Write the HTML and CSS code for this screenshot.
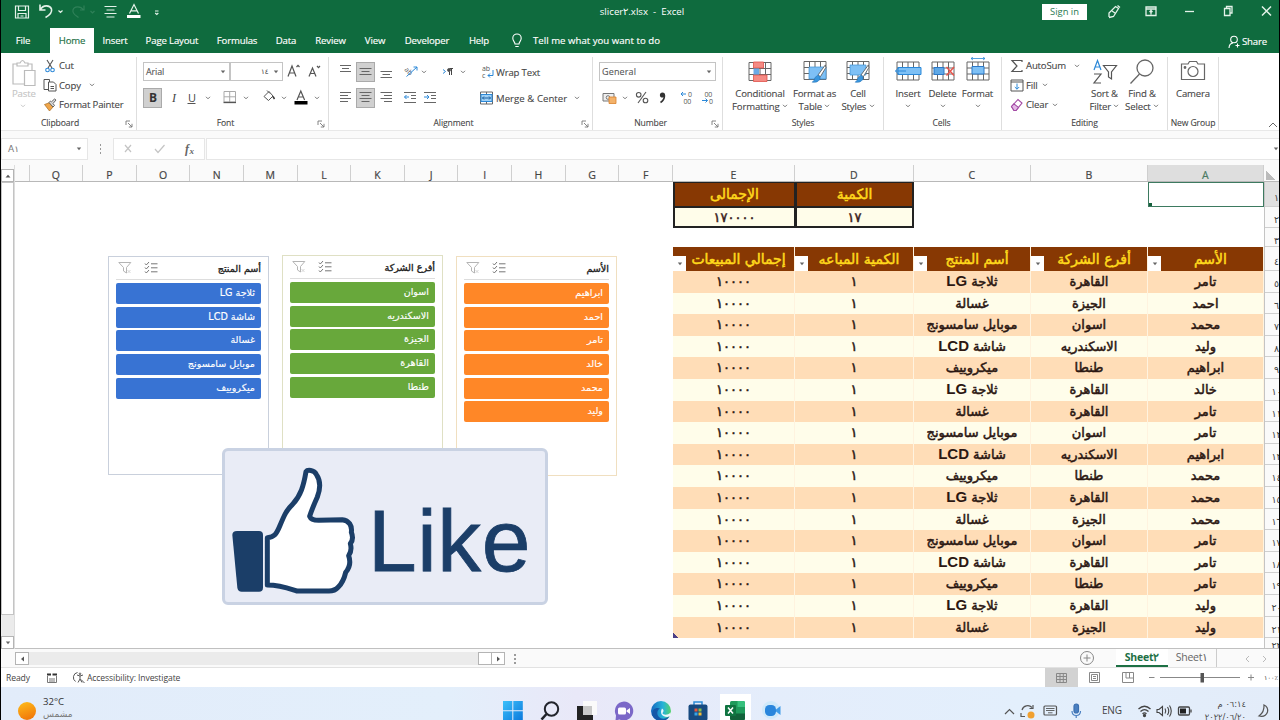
FILE: index.html
```html
<!DOCTYPE html>
<html lang="en">
<head>
<meta charset="utf-8">
<title>slicer2.xlsx - Excel</title>
<link rel="stylesheet" href="styles.css">
</head>
<body>
<svg class="defs" width="0" height="0">
  <symbol id="caret" viewBox="0 0 6 4"><path d="M1 .8 L3 2.8 L5 .8" fill="none" stroke="#777" stroke-width="1"/></symbol>
  <symbol id="tri" viewBox="0 0 6 4"><path d="M.8 .6 H5.2 L3 3.2 Z" fill="#666"/></symbol>
  <symbol id="launch" viewBox="0 0 8 8"><path d="M1 5 V1 H5 M3 3 L7 7 M7 3.8 V7 H3.8" fill="none" stroke="#777" stroke-width=".9"/></symbol>
  <symbol id="grid" viewBox="0 0 24 20"><path d="M1 1H23V19H1Z M1 7H23 M1 13H23 M6.5 1V19 M12 1V19 M17.5 1V19" fill="#fff" stroke="#666" stroke-width="1"/></symbol>
  <symbol id="brush" viewBox="0 0 16 22"><path d="M15 1 L7 12 L9.5 14 L15.5 4 Z" fill="#fff" stroke="#555" stroke-width=".9"/><path d="M6.5 12.5 Q10 13 9 17 Q6 21 .5 20 Q3.500 18 3.500 15 Z" fill="#3a96dd" stroke="#1f6fb5" stroke-width=".6"/></symbol>
  <symbol id="filter" viewBox="0 0 14 14"><path d="M.8 1.500H12.800L8.500 6.500V12L5.500 10V6.500Z" fill="none" stroke="#b4b4b4" stroke-width="1"/><path d="M9.500 9L12.500 12M12.500 9L9.500 12" stroke="#ccc" stroke-width=".8"/></symbol>
  <symbol id="multi" viewBox="0 0 14 14"><path d="M1 2.500L2.300 4L5 1M1 6.500L2.300 8L5 5M1 10.500L2.300 12L5 9M7 2.800H13.500M7 6.800H13.500M7 10.800H13.500" fill="none" stroke="#777" stroke-width="1"/></symbol>
</svg>

<div class="app">
  <header class="titlebar">
    <div class="titlerow">
      <svg class="quick" width="170" height="24" viewBox="0 0 170 24" fill="none" stroke="#e4f2e9" stroke-width="1.200">
        <path d="M15.500 6H28.500V18H15.500Z M18.500 6V10.500H25.500V6 M18 18V13.500H26V18 M20.500 16H23.500"/>
        <path d="M40 4.500V10H45.500 M40.300 9.800C43 4.500 50 5 51.500 9C52.500 13 49 15.500 45.500 17.500" stroke-width="1.600"/>
        <path d="M58.500 10.500L60.500 12.500L62.500 10.500"/>
        <path d="M84 5.500V10H80 M83.500 10C80.500 5.500 74 6 73 10C72 14 76 15.500 78.500 17.500" stroke="#2f8058"/>
        <path d="M90.500 11L92.500 13L94.500 11" stroke="#2f8058"/>
        <path d="M104.500 6.500H116.500 M106.500 10H114.500 M104.500 13.500H116.500 M106.500 17H114.500"/>
        <path d="M129.500 13.500L134 4.500L138.500 13.500 M131.200 10.800H136.800"/>
        <path d="M127 16.500H140.500" stroke="#fff" stroke-width="3"/>
        <path d="M155 11H158.500 M155.200 13L156.800 14.500L158.300 13"/>
      </svg>
      <div class="doc">slicer٢.xlsx&nbsp; -&nbsp; Excel</div>
      <div class="signin">Sign in</div>
      <svg class="winctl" width="180" height="24" viewBox="0 0 180 24" fill="none" stroke="#e4f2e9" stroke-width="1.300">
        <path d="M11 17V13L17.500 6.500L20.500 8.500L15.500 16.500L11 17.500M19.500 5.500L22 7.500M14 11L17 13"/>
        <path d="M48 7H58V15.500H48Z M48 9H58 M53 14.500V10.500M51.500 12L53 10.500L54.500 12"/>
        <path d="M87 11.500H96"/>
        <path d="M126.500 8.500H132V15.500H126.500Z M128.500 8V6.500H134V13H132.500"/>
        <path d="M164 6.500L173 15.500M173 6.500L164 15.500" stroke-width="1.500"/>
      </svg>
    </div>
    <nav class="tabs">
      <span class="tab t-file">File</span><span class="tab t-home">Home</span><span class="tab t-ins">Insert</span><span class="tab t-page">Page Layout</span><span class="tab t-form">Formulas</span><span class="tab t-data">Data</span><span class="tab t-rev">Review</span><span class="tab t-view">View</span><span class="tab t-dev">Developer</span><span class="tab t-help">Help</span>
      <svg class="bulb" width="12" height="16" viewBox="0 0 12 16" fill="none" stroke="#fff" stroke-width="1.100"><path d="M4 11C4 9 1.800 8 1.800 5.200A4.200 4.200 0 0 1 10.200 5.200C10.200 8 8 9 8 11ZM4.300 13.500H7.700"/></svg>
      <span class="tell">Tell me what you want to do</span>
      <span class="share"><svg width="12" height="14" viewBox="0 0 12 14" fill="none" stroke="#fff" stroke-width="1.100"><circle cx="6" cy="4.500" r="3.300"/><path d="M1 13C1.200 9.500 3 8.200 5 8M7.500 10.500H11.500M9.500 8.500V12.500"/></svg>Share</span>
    </nav>
  </header>

  <section class="ribbon">
    <div class="group g-clip">
      <div class="gbody">
        <div class="paste">
          <svg width="24" height="28" viewBox="0 0 24 28" fill="#fff" stroke="#bbb" stroke-width="1.200"><path d="M1 5H20V25H1Z"/><path d="M5 7V4H8Q10.500 -1 13 4H16V7Z"/><path d="M12.500 11.500H23V26.500H12.500Z"/></svg>
          <span>Paste</span><svg class="cr faint" width="6" height="4"><use href="#caret"/></svg>
        </div>
        <div class="cliprows">
          <div class="cmd"><svg width="14" height="14" viewBox="0 0 14 14" fill="none" stroke="#555" stroke-width="1.100"><path d="M4 1L9 9M10 1L5 9"/><circle cx="4.500" cy="11" r="1.800" stroke="#2b88d8"/><circle cx="9.500" cy="11" r="1.800" stroke="#2b88d8"/></svg><span>Cut</span></div>
          <div class="cmd"><svg width="14" height="14" viewBox="0 0 14 14" fill="#fff" stroke="#555"><path d="M1 1.500H6.500V11.500H1Z"/><path d="M5.500 4H10.500L13 6.500V13H5.500ZM7.500 8.500H11M7.500 10.500H11"/></svg><span>Copy</span><svg class="cr gap8" width="6" height="4"><use href="#caret"/></svg></div>
          <div class="cmd"><svg width="14" height="14" viewBox="0 0 14 14"><path d="M1.500 6.500L7 4.500L10 9L6.500 13Z" fill="#f0a64a" stroke="#a86a1f" stroke-width=".7"/><path d="M6 4.500L10 9L11.500 7.500L10 5.500L13 2L11.500 1L8.500 3.800L7.500 3Z" fill="#ddd" stroke="#555" stroke-width=".9"/></svg><span>Format Painter</span></div>
        </div>
      </div>
      <div class="glabel"><span>Clipboard</span><svg width="8" height="8"><use href="#launch"/></svg></div>
    </div>

    <div class="group g-font">
      <div class="gbody col">
        <div class="line1">
          <div class="combo c-name"><span>Arial</span><svg width="6" height="4"><use href="#tri"/></svg></div>
          <div class="combo c-size"><span class="ar">١٤</span><svg width="6" height="4"><use href="#tri"/></svg></div>
          <svg class="grow" width="36" height="18" viewBox="0 0 36 18" fill="none" stroke="#555" stroke-width="1.200"><path d="M1 13.500L5 3L9 13.500M2.500 10H7.500M9.500 4L11 2.300L12.500 4"/><path d="M22 13.500L25.500 5L29 13.500M23.300 10.500H27.700M30 3L31.500 4.700L33 3"/></svg>
        </div>
        <svg class="strip" width="180" height="20" viewBox="0 0 180 20">
          <rect x=".5" y=".5" width="18" height="19" fill="#d0d0d0" stroke="#aaa"/>
          <text x="6" y="13.500" class="sb">B</text><text x="29" y="13.500" class="si">I</text><text x="45" y="13.500" class="su">U</text>
          <path d="M44.500 15.500H52.500" stroke="#555"/>
          <use href="#caret" x="62" y="8" width="6" height="4"/>
          <path d="M81 3.500H92.500V14H81ZM86.700 3.500V14M81 8.800H92.500" fill="none" stroke="#aaa"/><path d="M80.500 14.500H93" stroke="#555" stroke-width="1.300"/>
          <use href="#caret" x="100" y="8" width="6" height="4"/>
          <path d="M121 8.500L126 3.500L130 8L125.500 12.500ZM124 2.500L127 5.500" fill="none" stroke="#555"/><path d="M130 8.500L131.500 11" stroke="#333" stroke-width="1.500"/>
          <use href="#caret" x="138" y="8" width="6" height="4"/>
          <path d="M154 12L157.800 3L161.600 12M155.300 9H160.300" fill="none" stroke="#555" stroke-width="1.200"/><rect x="151.500" y="13" width="13" height="3.500" fill="#000"/>
          <use href="#caret" x="171" y="8" width="6" height="4"/>
        </svg>
      </div>
      <div class="glabel"><span>Font</span><svg width="8" height="8"><use href="#launch"/></svg></div>
    </div>

    <div class="group g-align">
      <div class="gbody col">
        <div class="line1">
          <svg width="144" height="20" viewBox="0 0 144 20" fill="none" stroke="#666">
            <path d="M3 3.500H14M5 6.500H12M3 9.500H14"/>
            <rect x="19.500" y=".5" width="18" height="19" fill="#d0d0d0" stroke="#aaa"/>
            <path d="M22.500 6.500H34.500M24.500 9.500H32.500M22.500 12.500H34.500"/>
            <path d="M43.500 9.500H55M45.500 12.500H53M43.500 15.500H55"/>
            <text x="67" y="8" transform="rotate(45 67 8)" class="tiny">ab</text><path d="M69.500 14.500L80 5M80 8.500V5H76.500" stroke="#2b88d8"/>
            <use href="#caret" x="84" y="8" width="6" height="4"/>
            <path d="M106 7.500L108.500 9.500L106 11.500" stroke="#2b88d8"/><path d="M112.500 13V6.500H116M114.500 13V6.500" stroke="#444"/><circle cx="112" cy="8" r="1.500" fill="#444"/>
            <use href="#caret" x="123" y="8" width="6" height="4"/>
          </svg>
          <svg width="14" height="16" viewBox="0 0 14 16" fill="none"><text x="1" y="7" class="tiny">ab</text><text x="1" y="14" class="tiny">c</text><path d="M12 6V11.500H7M9 9.500L7 11.500L9 13.500" stroke="#2b88d8"/></svg>
          <span class="after">Wrap Text</span>
        </div>
        <div class="line2">
          <svg width="143" height="20" viewBox="0 0 143 20" fill="none" stroke="#666">
            <path d="M3 4.500H14M3 7.500H11M3 10.500H14M3 13.500H11"/>
            <rect x="19.500" y=".5" width="18" height="19" fill="#d0d0d0" stroke="#aaa"/>
            <path d="M22.500 4.500H34.500M24.500 7.500H32.500M22.500 10.500H34.500M24.500 13.500H32.500"/>
            <path d="M43.500 4.500H55M47 7.500H55M43.500 10.500H55M47 13.500H55"/>
            <path d="M67 4.500H79M74 7.500H79M74 10.500H79M67 14.500H79M87 4.500H99M94 7.500H99M94 10.500H99M87 14.500H99"/>
            <path d="M72 9H67.500M69.500 7L67.500 9L69.500 11M87 9H92M90 7L92 9L90 11" stroke="#2b88d8"/>
          </svg>
          <svg width="13" height="14" viewBox="0 0 13 14" fill="none" stroke="#666"><path d="M.5 1H12.500V13H.5ZM6.500 1V13" fill="#fff"/><rect x="1" y="3.500" width="11" height="7" fill="#9fd0f5" stroke="#2b88d8"/><path d="M2.500 7H10.500M4 5.500L2.500 7L4 8.500M9 5.500L10.500 7L9 8.500" stroke="#1a5fa0"/></svg>
          <span class="after merge">Merge &amp; Center</span><svg class="cr" width="6" height="4"><use href="#caret"/></svg>
        </div>
      </div>
      <div class="glabel"><span>Alignment</span><svg width="8" height="8"><use href="#launch"/></svg></div>
    </div>

    <div class="group g-num">
      <div class="gbody col">
        <div class="combo c-gen"><span>General</span><svg width="6" height="4"><use href="#tri"/></svg></div>
        <svg class="strip" width="118" height="20" viewBox="0 0 118 20" fill="none">
          <path d="M3 5.500H14V13H3Z" stroke="#777" fill="#eee"/><circle cx="8" cy="9.500" r="1.800" stroke="#777"/><path d="M9 9H16V15.500H9Z" fill="#f3b26a" stroke="#d9822b" stroke-width=".8"/>
          <use href="#caret" x="22" y="8" width="6" height="4"/>
          <circle cx="38.700" cy="6.800" r="2.300" stroke="#555" stroke-width="1.100"/><circle cx="45.500" cy="12.500" r="2.300" stroke="#555" stroke-width="1.100"/><path d="M46 4L38 15" stroke="#555" stroke-width="1.100"/>
          <circle cx="62.500" cy="7" r="2.600" fill="#333"/><path d="M64.500 7.500Q64.500 12 60.500 14.500" stroke="#333" stroke-width="1.600"/>
          <text x="88" y="8.500" class="tiny">0</text><text x="83.500" y="15.500" class="tiny">00</text><path d="M86 6H81M83 4L81 6L83 8" stroke="#2b88d8"/>
          <text x="104.500" y="8.500" class="tiny">00</text><text x="109" y="15.500" class="tiny">0</text><path d="M102 12.500H107.500M105.500 10.500L107.500 12.500L105.500 14.500" stroke="#2b88d8"/>
        </svg>
      </div>
      <div class="glabel"><span>Number</span><svg width="8" height="8"><use href="#launch"/></svg></div>
    </div>

    <div class="group g-styles">
      <div class="gbody big">
        <div class="bigbtn w64"><svg width="26" height="24" viewBox="0 0 26 24"><use href="#grid" x="1" y="1" width="24" height="21"/><path d="M6.500 2H16.500V8H6.500Z M6.500 15H20V21.500H6.500Z" fill="#f58b84" stroke="#e0524a" stroke-width=".8"/><path d="M6.500 8.500H12V14.500H6.500Z" fill="#6aa9e6"/></svg><span>Conditional</span><span>Formatting <svg class="cr" width="6" height="4"><use href="#caret"/></svg></span></div>
        <div class="bigbtn w44"><svg width="26" height="24" viewBox="0 0 26 24"><use href="#grid" x="1" y="0" width="24" height="21"/><path d="M7 7H24V19H7Z" fill="#7ec0f5" stroke="#3a8fd6" stroke-width=".7"/><use href="#brush" x="9" y="4" width="16" height="20"/></svg><span>Format as</span><span>Table <svg class="cr" width="6" height="4"><use href="#caret"/></svg></span></div>
        <div class="bigbtn w42"><svg width="26" height="24" viewBox="0 0 26 24"><use href="#grid" x="1" y="0" width="24" height="21"/><path d="M5 5H21V15H5Z" fill="#7ec0f5" stroke="#3a8fd6" stroke-width=".7"/><use href="#brush" x="9" y="4" width="16" height="20"/></svg><span>Cell</span><span>Styles <svg class="cr" width="6" height="4"><use href="#caret"/></svg></span></div>
      </div>
      <div class="glabel"><span>Styles</span></div>
    </div>

    <div class="group g-cells">
      <div class="gbody big">
        <div class="bigbtn w34"><svg width="28" height="24" viewBox="0 0 28 24"><use href="#grid" x="2" y="1" width="24" height="20"/><path d="M4 7.500H27V14.500H4Z" fill="#7ec0f5" stroke="#2b88d8"/><path d="M12 11H1.500M5 7.500L1.500 11L5 14.500" fill="none" stroke="#2b88d8"/></svg><span>Insert</span><span><svg class="cr" width="6" height="4"><use href="#caret"/></svg></span></div>
        <div class="bigbtn w35"><svg width="28" height="24" viewBox="0 0 28 24"><use href="#grid" x="2" y="1" width="24" height="20"/><path d="M5 7.500H15V14.500H5Z" fill="#5fa8e6" stroke="#2b78c8"/><path d="M17.500 7L25 15.500M25 7L17.500 15.500" stroke="#e8554d" stroke-width="1.500"/></svg><span>Delete</span><span><svg class="cr" width="6" height="4"><use href="#caret"/></svg></span></div>
        <div class="bigbtn w35 fmt"><svg width="28" height="27" viewBox="0 0 28 27"><path d="M7 1.500H21M9 0L7 1.500L9 3M19 0L21 1.500L19 3" fill="none" stroke="#2b88d8" stroke-width=".8"/><use href="#grid" x="2" y="4" width="24" height="20"/><path d="M8 9.500H20V17H8Z" fill="#7ec0f5" stroke="#2b78c8"/></svg><span>Format</span><span><svg class="cr" width="6" height="4"><use href="#caret"/></svg></span></div>
      </div>
      <div class="glabel"><span>Cells</span></div>
    </div>

    <div class="group g-edit">
      <div class="gbody">
        <div class="cliprows ed">
          <div class="cmd"><svg width="14" height="14" viewBox="0 0 14 14" fill="none" stroke="#555" stroke-width="1.200"><path d="M12 3V1.500H2L7 7L2 12.500H12V11"/></svg><span>AutoSum</span><svg class="cr gap8" width="6" height="4"><use href="#caret"/></svg></div>
          <div class="cmd"><svg width="14" height="14" viewBox="0 0 14 14" fill="#fff" stroke="#555"><path d="M1 2H13V13H1ZM1 4H13"/><path d="M7 5.500V11M4.800 9L7 11.200L9.200 9" fill="none" stroke="#2b88d8"/></svg><span>Fill</span><svg class="cr gap3" width="6" height="4"><use href="#caret"/></svg></div>
          <div class="cmd"><svg width="14" height="14" viewBox="0 0 14 14" fill="#fff" stroke="#a349a4" stroke-width="1.100"><path d="M1.500 8.500L8 1.500L12 5L6 12.500H4Z"/><path d="M4 5.800L8.500 9.500L6 12.500H4L1.500 8.500Z" fill="#e3b8e6"/></svg><span>Clear</span><svg class="cr gap3" width="6" height="4"><use href="#caret"/></svg></div>
        </div>
        <div class="bigbtn w36 e1"><svg width="26" height="26" viewBox="0 0 26 26" fill="none"><path d="M2 11L5.500 1.500L9 11M3.200 8H7.800" stroke="#2b88d8" stroke-width="1.200"/><path d="M2 15H9L2 24H9" stroke="#555" stroke-width="1.200"/><path d="M11.500 6.500H24.500L19.500 13V20L16.500 18V13Z" stroke="#555" stroke-width="1.200"/></svg><span>Sort &amp;</span><span>Filter <svg class="cr" width="6" height="4"><use href="#caret"/></svg></span></div>
        <div class="bigbtn w38 e1"><svg width="26" height="26" viewBox="0 0 26 26" fill="none" stroke="#666" stroke-width="1.300"><circle cx="16" cy="9" r="8"/><path d="M10.500 15L1.500 24.500"/></svg><span>Find &amp;</span><span>Select <svg class="cr" width="6" height="4"><use href="#caret"/></svg></span></div>
      </div>
      <div class="glabel"><span>Editing</span></div>
    </div>

    <div class="group g-new">
      <div class="gbody big"><div class="bigbtn w50"><svg width="26" height="24" viewBox="0 0 26 24" fill="none" stroke="#666" stroke-width="1.200"><path d="M1.500 4H8L9.500 1.500H16.500L18 4H24.500V19.500H1.500Z"/><circle cx="13" cy="11.500" r="5"/><circle cx="5" cy="7.500" r=".8" fill="#333"/></svg><span>Camera</span></div></div>
      <div class="glabel"><span>New Group</span></div>
    </div>
    <div class="collapse"><svg width="10" height="6" viewBox="0 0 10 6"><path d="M1 5L5 1L9 5" fill="none" stroke="#666"/></svg></div>
  </section>

  <section class="fbar">
    <div class="namebox"><span class="ar">A١</span><svg width="6" height="4"><use href="#tri"/></svg></div>
    <div class="dots"></div>
    <div class="fxbox"><svg width="92" height="20" viewBox="0 0 92 20" fill="none" stroke="#c4c4c4" stroke-width="1.200"><path d="M11 6L17 13M17 6L11 13M41 10L44 13.500L50.500 6"/><text x="71" y="14" class="fx">f</text><text x="75.500" y="15" class="fx fxs">x</text></svg></div>
    <div class="finput"><svg width="6" height="4"><use href="#tri"/></svg></div>
  </section>

  <main class="work">
    <div class="vscroll">
      <div class="sbtn up"><svg width="6" height="4" viewBox="0 0 6 4"><path d="M.5 3.500H5.500L3 .8Z" fill="#555"/></svg></div>
      <div class="vthumb"></div><div class="vtrack"></div>
      <div class="sbtn"><svg width="6" height="4"><use href="#tri"/></svg></div>
    </div>
    <div class="sheet">
      <div class="colheads" id="colheads"></div>
      <div class="cells">
        <div class="canvas" id="slicers"></div>
        <div class="tables">
          <div class="totals">
            <div class="tot th">الإجمالى</div><div class="tot th">الكمية</div>
            <div class="tot">١٧٠٠٠٠</div><div class="tot">١٧</div>
            <div class="selected"><i></i></div>
          </div>
          <div class="data" id="data"></div>
        </div>
        <div class="rownums" id="rownums"></div>
        <div class="like">
          <svg width="136" height="150" viewBox="30 50 408 450"><path d="M66 272H132Q144 272 144 284V442Q144 454 132 454H80Q69 454 67 442L52 284Q52 272 66 272Z" fill="#1b3e68"/><path d="M157 292C178 290 184 282 194 258C208 224 214 210 232 193C258 165 266 135 273 94C277 88 297 88 304 102C318 122 316 146 307 170C294 199 288 215 284 228C287 236 296 240 311 240L382 238C402 240 412 256 409 276C414 288 414 300 406 310C410 324 408 336 401 346C408 366 404 382 392 396C388 414 382 428 370 440C362 449 355 452 342 452H246C218 443 195 434 157 434Z" fill="#fff" stroke="#1b3e68" stroke-width="15" stroke-linejoin="round"/></svg>
          <span>Like</span>
        </div>
      </div>
    </div>
  </main>

  <section class="sheetbar">
    <div class="hscroll"><div class="sbtn h"><svg width="5" height="6" viewBox="0 0 5 6"><path d="M4 .5V5.500L1 3Z" fill="#555"/></svg></div><div class="htrack"></div><div class="sbtn h"></div><div class="sbtn h"><svg width="5" height="6" viewBox="0 0 5 6"><path d="M1 .5V5.500L4 3Z" fill="#555"/></svg></div></div>
    <div class="dots low"></div>
    <svg class="plus" width="16" height="16" viewBox="0 0 16 16" fill="none" stroke="#888"><circle cx="8" cy="8" r="6.500"/><path d="M8 4.500V11.500M4.500 8H11.500"/></svg>
    <span class="stab on">Sheet٢</span><span class="stab">Sheet١</span>
    <svg class="navs" width="30" height="10" viewBox="0 0 30 10" fill="none" stroke="#bbb"><path d="M7 2L4 5L7 8M21 2L24 5L21 8"/></svg>
  </section>

  <section class="status">
    <span class="ready">Ready</span>
    <svg width="12" height="12" viewBox="0 0 12 12" fill="none" stroke="#777"><path d="M1.500 4V10.500H10.500V4M3 7H9M3 9H9"/><path d="M1 2.500H5M6.500 2.500H11" stroke="#333" stroke-width="2"/></svg>
    <svg class="acc" width="13" height="13" viewBox="0 0 13 13" fill="none" stroke="#555"><path d="M5.500 1.500A5 5 0 0 0 3.500 10.500M5 4L8 5L11 4M8 5V8L6 11.500M8 8L10 11.500M9 8.500L12.500 12"/><circle cx="8" cy="2.800" r=".8"/></svg>
    <span class="acctext">Accessibility: Investigate</span>
    <svg class="views" width="216" height="19" viewBox="0 0 216 19" fill="none" stroke="#888">
      <rect x="1" y="0" width="33" height="19" fill="#d2d2d2" stroke="none"/>
      <path d="M12.500 5.500H22.500V14.500H12.500ZM16 5.500V14.500M19.300 5.500V14.500M12.500 8.500H22.500M12.500 11.500H22.500"/>
      <path d="M45.500 4.500H55.500V14.500H45.500ZM47.500 6.500H53.500V12.500H47.500ZM49 8.500H52M49 10.500H52"/>
      <path d="M78.500 4.500H89.500V14.500H78.500ZM82 4.500V10H85.500V4.500M85.500 10H89"/>
      <path d="M105 9.500H110.500M116 9.500H196M204 9.500H210M207 6.500V12.500"/>
      <rect x="156.500" y="5" width="3.500" height="9.500" fill="#555" stroke="none"/>
    </svg>
    <span class="pct ar">١٠٠٪</span>
  </section>

  <footer class="taskbar">
    <span class="sun"></span>
    <div class="weather"><b>32°C</b><span class="ar">مشمس</span></div>
    <div class="pins">
      <svg width="22" height="22" viewBox="0 0 22 22"><path d="M1 1H10.300V10.300H1ZM11.300 1H20.800V10.300H11.300ZM1 11.300H10.300V20.800H1ZM11.300 11.300H20.800V20.800H11.300Z" fill="url(#win)"/><defs><linearGradient id="win" x2="1" y2="1"><stop stop-color="#3cc0fa"/><stop offset="1" stop-color="#0a78dc"/></linearGradient></defs></svg>
      <svg width="22" height="22" viewBox="0 0 22 22" fill="none" stroke="#22242c" stroke-width="2"><circle cx="12.500" cy="9" r="6.700"/><path d="M7.500 14L2.500 19.500" stroke-width="2.600"/></svg>
      <svg width="22" height="22" viewBox="0 0 22 22"><rect x="7" y="1" width="14" height="14" fill="#fafafa"/><path d="M1 6H7V15H17V20H1Z" fill="#222"/><rect x="7" y="6" width="9" height="9" fill="#c8c8c8"/></svg>
      <svg width="22" height="22" viewBox="0 0 22 22"><path d="M11 1.500A9.500 9.500 0 1 1 6.500 19.500L2.500 20.500L3 15.500A9.500 9.500 0 0 1 11 1.500Z" fill="#7b68c8"/><rect x="5" y="7.500" width="8" height="7" rx="1.500" fill="#fff"/><path d="M13.500 10.500L17 8V14L13.500 11.500Z" fill="#fff"/></svg>
      <svg width="22" height="22" viewBox="0 0 22 22"><defs><linearGradient id="edge" x2="1"><stop stop-color="#1668c0"/><stop offset=".6" stop-color="#27b3d8"/><stop offset="1" stop-color="#56d36c"/></linearGradient></defs><circle cx="11" cy="11" r="10" fill="url(#edge)"/><path d="M10 8.500C5 11 7 20 15 18.500L19.500 16.500A10 10 0 0 1 2 15C2 8 7 7 10 8.500Z" fill="#1557a8"/><path d="M12 8.500C14 9.500 14 11.500 12.500 13C12.500 15 18 15.500 20.500 12.500L21 15.500L17.500 17C12 17 9.500 13 12 8.500Z" fill="#eef6fb"/></svg>
      <svg width="22" height="22" viewBox="0 0 22 22"><path d="M7 5V2H15V5" fill="none" stroke="#2c8dd8" stroke-width="1.500"/><rect x="1.500" y="4.500" width="19" height="16" rx="2" fill="#174a80"/><path d="M7.500 8.500H10.500V11.500H7.500Z" fill="#e8573a"/><path d="M11.500 8.500H14.500V11.500H11.500Z" fill="#8cc04b"/><path d="M7.500 12.500H10.500V15.500H7.500Z" fill="#38a4e4"/><path d="M11.500 12.500H14.500V15.500H11.500Z" fill="#f5bd35"/></svg>
      <span class="active"><svg width="22" height="22" viewBox="0 0 22 22"><rect x="6" y="1" width="15" height="19" rx="1.500" fill="#1f9a5b"/><path d="M13.500 1H19.500Q21 1 21 2.500V7H13.500Z" fill="#36c07c"/><path d="M6 13.500H21V18.500Q21 20 19.500 20H7.500Q6 20 6 18.500Z" fill="#12623a"/><rect x="1" y="5" width="11" height="11" rx="1" fill="#0f7440"/><path d="M4 7.500L9 13.500M9 7.500L4 13.500" stroke="#fff" stroke-width="1.500"/></svg></span>
      <svg width="22" height="22" viewBox="0 0 22 22"><circle cx="10" cy="10" r="9" fill="#cfe9fa"/><rect x="4" y="5" width="11" height="11" rx="4.500" fill="#2a86dc"/><path d="M15 9.500L19.500 6V15L15 11.500Z" fill="#3f9be8"/></svg>
    </div>
    <svg class="tray" width="90" height="20" viewBox="0 0 90 20" fill="none" stroke="#555" stroke-width="1.200"><path d="M6 13L10.500 8.500L15 13"/><path d="M23 9A6 6 0 0 1 33 6.500M34 4V7.500H30.500M22 12V15.500H26"/><circle cx="32" cy="14" r="3.500" fill="#f0a030" stroke="none"/><rect x="45" y="5" width="12.500" height="9" rx="1"/><path d="M47 7.500H55.500M47 9.500H55.500M49 11.800H53.500" stroke-width=".9"/><rect x="75" y="3" width="4.500" height="9" rx="2.200" fill="#4a7fc0" stroke="#3b6fb0"/><path d="M73 10Q73 14.500 77.200 14.500Q81.500 14.500 81.500 10M77.200 14.500V17" stroke="#4a7fc0"/></svg>
    <span class="eng">ENG</span>
    <svg class="tray2" width="60" height="20" viewBox="0 0 60 20" fill="none" stroke="#444" stroke-width="1.300"><path d="M1.500 8Q7.500 2.500 13.500 8M3.500 10.500Q7.500 6.800 11.500 10.500M5.500 12.700Q7.500 11 9.500 12.700"/><circle cx="7.500" cy="14.500" r="1" fill="#444"/><path d="M20 8.500H22L25.500 5.500V14.500L22 11.500H20ZM28 7.500Q29.500 10 28 12.500M30.500 6Q33 10 30.500 14M32.500 4.500Q36 10 32.500 15.500" stroke-width="1.100"/><rect x="41.500" y="6" width="11" height="8" rx="1.200"/><rect x="43" y="7.500" width="6" height="5" fill="#222" stroke="none"/><path d="M54 8.500V11.500"/></svg>
    <div class="clock ar"><span dir="rtl">٠٦:١٤ م</span><span dir="ltr">٢٠٢٢/٠٦/٢٠</span></div>
    <svg class="moon" width="14" height="16" viewBox="0 0 14 16"><path d="M8 2Q12.500 4 11.500 9Q9.500 14.500 3 13Q8.500 9 8 2Z" fill="none" stroke="#555" stroke-width="1.200"/></svg>
  </footer>
</div>
<script src="app.js"></script>
</body>
</html>
```

FILE: styles.css
```css
* { box-sizing: border-box; }
body { margin: 0; background: #000; font-family: "Open Sans", "Noto Sans", sans-serif; font-size: 9.6px; color: #444; }
svg { display: block; flex: none; }
.defs { position: absolute; }
.ar { font-family: "DejaVu Sans", sans-serif; }
.app { width: 1280px; height: 720px; overflow: hidden; display: flex; flex-direction: column; border: solid #000; border-width: 0 1px; background: #fafafa; }

.titlebar { height: 53px; background: #0f6b3e; color: #fff; display: flex; flex-direction: column; flex: none; }
.titlerow { height: 28px; display: flex; }
.quick { margin-left: -1px; }
.doc { width: 142px; margin-left: 401px; text-align: center; line-height: 23px; font-size: 9.700px; white-space: nowrap; }
.signin { width: 45px; height: 16px; margin: 4px 0 0 329px; background: #fff; color: #2c7a53; text-align: center; line-height: 15px; font-size: 9.400px; }
.winctl { margin-left: 11px; }
.tabs { height: 25px; display: flex; line-height: 25px; white-space: nowrap; letter-spacing: -.15px; -webkit-text-stroke: .15px; }
.tab { text-align: center; flex: none; }
.t-file { width: 44px; margin-right: 5px; }
.t-home { width: 44px; background: #fff; color: #1d7044; }
.t-ins { width: 42px; } .t-page { width: 72px; } .t-form { width: 58px; } .t-data { width: 40px; }
.t-rev { width: 49px; } .t-view { width: 40px; } .t-dev { width: 64px; } .t-help { width: 40px; }
.bulb { margin: 5px 0 0 12px; }
.tell { margin-left: 10px; width: 160px; letter-spacing: .03px; }
.share { display: flex; gap: 2px; margin-left: 535px; line-height: 28px; }
.share svg { margin-top: 7px; }

.ribbon { height: 78px; background: #fff; display: flex; flex: none; border-bottom: 1px solid #e8e8e8; padding-top: 4px; white-space: nowrap; letter-spacing: -.17px; -webkit-text-stroke: .1px; }
.group { border-right: 1px solid #dedede; height: 73px; display: flex; flex-direction: column; flex: none; }
.g-clip { width: 136px; } .g-font { width: 192px; } .g-align { width: 264px; } .g-num { width: 130px; }
.g-styles { width: 161px; } .g-cells { width: 118px; } .g-edit { width: 166px; } .g-new { width: 51px; }
.gbody { height: 60px; display: flex; }
.gbody.col { flex-direction: column; }
.glabel { height: 13px; display: flex; align-items: center; font-size: 8.6px; line-height: 13px; padding-left: 4px; letter-spacing: -.1px; }
.glabel span { flex: 1; text-align: center; }
.glabel svg { margin-right: 3px; }
.g-clip .glabel span { padding-right: 10px; }
.g-font .glabel span, .g-align .glabel span, .g-num .glabel span { padding-right: 7px; }
.g-new .glabel, .g-styles .glabel, .g-cells .glabel, .g-edit .glabel { padding-left: 0; }
.g-cells .glabel span { padding-right: 2px; }
.cr { display: inline-block; vertical-align: 2px; }
.faint { opacity: .4; }
.paste { width: 41px; padding: 2px 0 0 11px; color: #c4c4c4; display: flex; flex-direction: column; }
.paste span { line-height: 14px; }
.paste .cr { margin: 3px 0 0 8px; }
.cliprows { display: flex; flex-direction: column; padding: 0 0 0 1px; margin-top: -1px; }
.cmd { height: 19.5px; display: flex; align-items: center; gap: 2px; }
.gap8 { margin-left: 6px; } .gap3 { margin-left: 2px; }
.combo { border: 1px solid #c4c4c4; height: 19px; display: flex; align-items: center; justify-content: space-between; padding: 0 3px 0 2px; background: #fff; font-size: 9px; color: #555; }
.c-name { width: 87px; } .c-size { width: 53px; padding-left: 30px; font-size: 7px; }
.c-gen { width: 117px; margin: 5px 0 0 6px; letter-spacing: .15px; }
.g-font .gbody { padding: 5px 0 0 6px; }
.line1, .line2 { display: flex; align-items: center; }
.grow { margin-left: 4px; }
.strip { margin-top: 7px; }
.g-num .strip { margin: 7px 0 0 7px; }
.sb { font: bold 12px "Open Sans", sans-serif; fill: #333; }
.si { font: italic 12px "Liberation Serif", serif; fill: #444; }
.su { font: 11px "Open Sans", sans-serif; fill: #444; }
.tiny { font: 7px "Open Sans", sans-serif; fill: #555; stroke: none; }
.g-align .gbody { padding: 5px 0 0 8px; gap: 6px; }
.after { margin-left: 1px; }
.merge { margin: 0 7px 0 3px; letter-spacing: .05px; }
.bigbtn { display: flex; flex-direction: column; align-items: center; padding-top: 3px; line-height: 13px; }
.bigbtn > svg { height: 24px; margin-bottom: 3px; }
.bigbtn.fmt { padding-top: 0; } .bigbtn.fmt > svg { height: 27px; }
.w64 { width: 64px; } .w44 { width: 45px; } .w42 { width: 42px; } .w34 { width: 34px; } .w35 { width: 35px; } .w36 { width: 37px; } .w38 { width: 38px; } .w50 { width: 50px; }
.g-styles .big { padding-left: 5px; } .g-cells .big { padding-left: 7px; }
.ed { width: 76px; padding-left: 8px; flex: none; margin-right: 8px; }
.e1 { padding-top: 2px; } .e1 > svg { height: 26px; margin-bottom: 2px; }
.collapse { margin: 65px 0 0 49px; }

.fbar { height: 34px; display: flex; flex: none; padding-top: 7px; background: #fafafa; }
.fbar > div { height: 22px; }
.namebox { width: 87px; background: #fff; border: 1px solid #e6e6e6; display: flex; align-items: center; justify-content: space-between; padding: 0 5px 0 6px; color: #777; font-size: 9px; }
.fbar .dots { width: 25px; height: 12px; margin-top: 5px; background: radial-gradient(circle, #999 .7px, transparent 1px) center 0 / 25px 4px repeat-y; }
.fxbox { width: 92px; background: #fff; border: 1px solid #e6e6e6; }
.fx { font: italic bold 12px "Liberation Serif", serif; fill: #666; stroke: none; } .fxs { font-size: 9px; }
.finput { margin-left: 1px; flex: 1; background: #fff; border: 1px solid #e6e6e6; border-right: 0; display: flex; align-items: center; justify-content: flex-end; }

.work { height: 484px; display: flex; flex: none; }
.vscroll { width: 14px; padding-top: 4px; display: flex; flex-direction: column; border-right: 1px solid #ddd; flex: none; }
.sbtn { width: 13px; height: 13px; border: 1px solid #b4b4b4; background: #fff; display: flex; align-items: center; justify-content: center; flex: none; }
.vthumb { height: 433px; width: 13px; border: 1px solid #c4c4c4; background: #fff; }
.vtrack { flex: 1; background: #ebebeb; }
.sheet { flex: 1; display: flex; flex-direction: column; min-width: 0; }
.colheads { height: 17px; display: flex; border-bottom: 1px solid #b8b8b8; flex: none; overflow: hidden; }
.colheads span { flex: none; height: 17px; border-right: 1px solid #cfcfcf; text-align: center; font-size: 10.500px; line-height: 21px; color: #444; -webkit-text-stroke: .2px; }
.colheads .h-pad { width: 14.600px; }
.colheads .sel { background: #dedede; color: #4a7a62; }
.colheads .corner { width: 15px; border: 0; background: linear-gradient(45deg, #bbb 46%, transparent 48%) 2px 5px / 10px 10px no-repeat; }
.cells { flex: 1; display: flex; background: #fff; position: relative; overflow: hidden; min-height: 0; border-bottom: 1px solid #c0c0c0; }
.canvas { width: 658px; display: flex; flex: none; align-items: flex-start; padding: 73px 0 0 93px; gap: 13px; direction: ltr; }
.slicer { width: 161px; height: 220px; border: 1px solid #c9d0dc; padding: 0 7px; flex: none; display: flex; flex-direction: column; }
.slicer.green { border-color: #dfe0c4; } .slicer.orange { border-color: #f0dfc0; }
.slicer.blue, .slicer.orange { margin-top: 1px; }
.slicer.blue { height: 219px; }
.sl-head { height: 23px; border-bottom: 1px solid #ddd; display: flex; align-items: center; color: #222; font: 9.600px "DejaVu Sans", sans-serif; -webkit-text-stroke: .35px; margin-bottom: 3px; flex: none; }
.sl-head svg { margin: 0 12px 0 2px; } .sl-head svg + svg { margin: 0; }
.sl-head span { flex: 1; text-align: right; }
.sl-item { height: 21px; margin-bottom: 2.700px; border-radius: 2px; color: #fff; font: 9.600px/20px "DejaVu Sans", sans-serif; -webkit-text-stroke: .15px; text-align: right; padding-right: 6px; flex: none; }
.blue .sl-item { background: #3873d3; } .green .sl-item { background: #68a83b; } .orange .sl-item { background: #ff8727; }

.tables { width: 591px; flex: none; display: flex; flex-direction: column; font-family: "DejaVu Sans", sans-serif; -webkit-text-stroke: .5px; }
.totals { display: grid; grid-template-columns: 122px 119px 234px 116px; grid-template-rows: 25px 21px; height: 65px; flex: none; }
.tot { border: 1px solid #222; border-left-width: 2px; background: #fffdea; color: #3a2020; text-align: center; font-size: 13px; letter-spacing: .7px; line-height: 19px; }
.tot.th { background: #873803; color: #ffd91c; font-size: 14px; letter-spacing: 0; line-height: 22px; }
.tot:nth-child(2), .tot:nth-child(4) { border-right-width: 2px; }
.tot:nth-child(3), .tot:nth-child(4) { grid-row: 2; border-bottom-width: 2px; }
.selected { grid-column: 4; grid-row: 1; border: 1.500px solid #3d7a60; display: flex; align-items: flex-end; }
.selected i { width: 3px; height: 3px; background: #17603c; }
.drow { display: grid; grid-template-columns: 122px 119px 117px 117px 116px; height: 21.600px; font-size: 13px; color: #2b1712; background: #ffddb7; }
.drow:nth-child(odd) { background: #fffdea; }
.drow span { border-right: 1px solid #fff3df; text-align: center; line-height: 21px; white-space: nowrap; overflow: hidden; }
.drow:not(.dh) span:first-child { letter-spacing: .8px; }
.drow:last-child span:first-child { background: linear-gradient(45deg, #4b3f86 50%, transparent 52%) left bottom / 5px 5px no-repeat; }
.drow bdi { font: bold 15px "Liberation Sans", sans-serif; -webkit-text-stroke: 0; }
.drow.dh { height: 24px; background: #873803; color: #ffd91c; font-size: 14px; }
.drow.dh span { display: flex; align-items: flex-end; justify-content: center; line-height: 23px; letter-spacing: 0; }
.drow.dh b { flex: 1; margin-left: -3px; font-weight: normal; }
.drow.dh i { width: 13px; height: 15px; background: #fff; flex: none; display: flex; align-items: center; justify-content: center; }
.rownums { width: 15px; background: #fafafa; border-left: 1px solid #c4c4c4; overflow: hidden; flex: none; }
.rownums span { display: block; width: 23px; height: 21.600px; border-bottom: 1px solid #cfcfcf; text-align: center; font: 9.500px/25px "DejaVu Sans", sans-serif; overflow: hidden; }
.rownums .r1 { height: 25px; background: #e0e0e0; line-height: 32px; } .rownums .r2 { height: 21px; } .rownums .r3 { height: 19px; } .rownums .r4 { height: 24px; line-height: 30px; }
.rownums .r22 { line-height: 15px; }
.like { position: absolute; left: 207px; top: 266px; width: 326px; height: 157px; border: 3px solid #c9d2e3; border-radius: 6px; background: #e9ecf6; display: flex; }
.like svg { margin: 6px 0 0 0; }
.like span { font: 87.500px/100px "Liberation Sans", sans-serif; color: #1b3e68; margin: 40px 0 0 7px; letter-spacing: .6px; -webkit-text-stroke: .8px; }

.sheetbar { height: 19px; display: flex; flex: none; border-bottom: 1px solid #e2e2e2; background: #fafafa; }
.hscroll { width: 490px; margin: 3px 0 0 14px; display: flex; flex: none; }
.sbtn.h { width: 14px; height: 13px; margin-left: -1px; } .sbtn.h:first-child { margin-left: 0; }
.htrack { flex: 1; height: 13px; background: #ebebeb; }
.low { height: 12px; margin-top: 4px; width: 20px; background: radial-gradient(circle, #999 .7px, transparent 1px) center 0 / 20px 4px repeat-y; flex: none; }
.plus { margin: 1px 0 0 554px; }
.stab { height: 18px; width: 49px; text-align: center; line-height: 16px; font-size: 10.500px; color: #666; border-right: 1px solid #ccc; flex: none; white-space: nowrap; letter-spacing: -.2px; }
.stab.on { width: 52px; margin-left: 21px; border-bottom: 2px solid #1d7044; border-right: 0; background: #fff; color: #1d7044; font-weight: bold; }
.navs { margin: 5px 0 0 25px; }

.status { height: 19px; background: #fff; display: flex; align-items: center; flex: none; font-size: 8.600px; white-space: nowrap; letter-spacing: -.1px; }
.ready { width: 40px; padding-left: 5px; margin-right: 5px; }
.acc { margin-left: 14px; }
.acctext { margin-left: 2px; width: 957px; flex: none; }
.pct { font-size: 6.500px; margin-left: 4px; letter-spacing: -.5px; }

.taskbar { flex: 1; display: flex; align-items: center; background: linear-gradient(90deg, #e2ecfa, #e3effb 35%, #e9e8f8 45%, #e4edfb 60%, #e3effc 80%, #e3ecf9); }
.sun { width: 18px; height: 18px; margin: 7px 0 0 17px; border-radius: 50%; background: linear-gradient(160deg, #ffbe1a, #ef6e08); flex: none; }
.weather { width: 60px; margin: 8px 0 0 7px; display: flex; flex-direction: column; line-height: 13px; height: 33px; flex: none; }
.weather b { font-weight: normal; color: #333; }
.weather .ar { font-size: 9px; color: #777; }
.pins { margin: 6px 0 0 399px; display: flex; gap: 15px; align-items: center; }
.active { background: #fff; width: 31px; height: 33px; margin: -4px -4.500px; display: flex; align-items: center; justify-content: center; }
.tray { margin: 7px 0 0 216px; }
.eng { margin: 5px 0 0 13px; width: 22px; font-size: 10px; letter-spacing: -.2px; }
.tray2 { margin: 6px 0 0 13px; }
.clock { width: 46px; margin: 6px 0 0 3px; font-size: 8.300px; line-height: 13px; display: flex; flex-direction: column; align-items: flex-end; white-space: nowrap; letter-spacing: -.3px; }
.clock span { display: block; }
.moon { margin: 6px 0 0 10px; }
```

FILE: app.js
```js
const el = (cls, html, tag = 'span') => `<${tag}${cls ? ` class="${cls}"` : ''}>${html}</${tag}>`;
const arabic = n => String(n).replace(/\d/g, d => '٠١٢٣٤٥٦٧٨٩'[d]);
const caret = '<svg width="6" height="4"><use href="#tri"/></svg>';

// Column headings, right-to-left sheet
const widths = { E: 122, D: 119, C: 117, B: 117, A: 116 };
document.getElementById('colheads').innerHTML =
  el('h-pad', '') + [...'QPONMLKJIHGF'].map(c => `<span style="width:53.62px">${c}</span>`).join('') +
  [...'EDCBA'].map(c => `<span class="${c === 'A' ? 'sel' : ''}" style="width:${widths[c]}px">${c}</span>`).join('') +
  el('corner', '');

// Slicers
const slicers = [
  ['blue', 'أسم المنتج', ['ثلاجة LG', 'شاشة LCD', 'غسالة', 'موبايل سامسونج', 'ميكروييف']],
  ['green', 'أفرع الشركة', ['اسوان', 'الاسكندريه', 'الجيزة', 'القاهرة', 'طنطا']],
  ['orange', 'الأسم', ['ابراهيم', 'احمد', 'تامر', 'خالد', 'محمد', 'وليد']],
];
document.getElementById('slicers').innerHTML = slicers.map(([color, title, items]) =>
  `<div class="slicer ${color}"><div class="sl-head"><svg width="14" height="14"><use href="#filter"/></svg><svg width="14" height="14"><use href="#multi"/></svg><span dir="rtl">${title}</span></div>` +
  items.map(i => `<div class="sl-item" dir="rtl">${i}</div>`).join('') + '</div>').join('');

// Sales table
const products = ['ثلاجة <bdi>LG</bdi>', 'غسالة', 'موبايل سامسونج', 'شاشة <bdi>LCD</bdi>', 'ميكروييف'];
const people = 'تامر احمد محمد وليد ابراهيم خالد تامر تامر ابراهيم محمد محمد محمد تامر تامر تامر وليد وليد'.split(' ');
const branches = 'القاهرة الجيزة اسوان الاسكندريه طنطا القاهرة القاهرة اسوان الاسكندريه طنطا القاهرة الجيزة اسوان القاهرة طنطا القاهرة الجيزة'.split(' ');
const heads = ['إجمالي المبيعات', 'الكمية المباعه', 'أسم المنتج', 'أفرع الشركة', 'الأسم'];
document.getElementById('data').innerHTML =
  '<div class="drow dh">' + heads.map(h => `<span><i>${caret}</i><b>${h}</b></span>`).join('') + '</div>' +
  people.map((p, i) => '<div class="drow">' +
    ['١٠٠٠٠', '١', products[i % 5], branches[i], p].map(v => `<span dir="rtl">${v}</span>`).join('') + '</div>').join('');

document.getElementById('rownums').innerHTML =
  Array.from({ length: 22 }, (_, i) => el('r' + (i + 1), arabic(i + 1))).join('');
```
